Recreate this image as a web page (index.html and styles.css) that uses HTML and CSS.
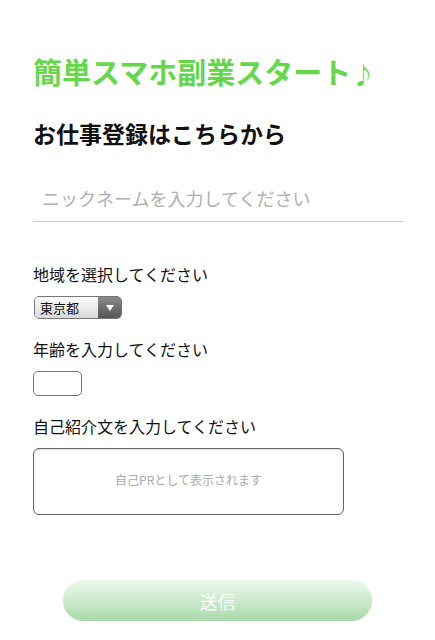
FILE: index.html
```html
<!DOCTYPE html>
<html lang="ja">
<head>
    <meta charset="UTF-8">
    <meta name="viewport" content="width=device-width, initial-scale=1.0">
    <title>お仕事登録</title>
    <link rel="stylesheet" href="styles.css">
</head>
<body>

    <div class="container">
        <h1 class="title">簡単スマホ副業スタート<span class="note">♪</span></h1>
        <h2 class="subtitle">お仕事登録はこちらから</h2>
        <form id="entryForm">
            <div class="nickname">
                <input type="text" name="nickname" placeholder="ニックネームを入力してください">
            </div>
            <div class="form-group">
                <label for="area">地域を選択してください</label>
                <div class="select-box">
                    <span class="select-value">東京都</span>
                    <span class="select-arrow"></span>
                </div>
            </div>
            <div class="form-group">
                <label for="age">年齢を入力してください</label>
                <input type="text" id="age" class="age" name="age">
            </div>
            <div class="form-group">
                <label for="profile">自己紹介文を入力してください</label>
                <textarea id="profile" name="profile" placeholder="自己PRとして表示されます"></textarea>
            </div>
            <div class="submit-row">
                <button type="submit">送信</button>
            </div>
        </form>
    </div>

</body>
</html>
```

FILE: styles.css
```css
body {
    font-family: "Noto Sans CJK JP", sans-serif;
    background-color: #ffffff;
    color: #111;
    margin: 0;
}
.container {
    padding: 50px 32px 0 33px;
}
.title {
    margin: 0;
    height: 42px;
    font-size: 29px;
    line-height: 42px;
    font-weight: bold;
    color: #64d84a;
}
.title .note {
    font-size: 24px;
    line-height: 1;
}
.subtitle {
    margin: 24px 0 0;
    font-size: 23px;
    line-height: 34px;
    font-weight: bold;
    color: #111;
}
.nickname {
    margin-top: 33px;
    border-bottom: 1px solid #c8c8c8;
    padding: 0 0 8px 9px;
}
.nickname input {
    width: 100%;
    border: none;
    outline: none;
    padding: 0;
    font-family: inherit;
    font-size: 18px;
    line-height: 30px;
    color: #333;
}
.nickname input::placeholder {
    color: #b0b0b0;
}
.form-group {
    margin-top: 40px;
}
.form-group + .form-group {
    margin-top: 18px;
}
label {
    display: block;
    font-size: 16px;
    line-height: 24px;
    margin-bottom: 10px;
}
.select-box {
    display: flex;
    width: 86px;
    height: 21px;
    border: 1px solid #777;
    border-radius: 5px;
    overflow: hidden;
    margin-left: 1px;
}
.select-value {
    flex: 1;
    font-size: 13px;
    line-height: 21px;
    padding-left: 5px;
    background: linear-gradient(#fdfdfd, #d9d9d9);
}
.select-arrow {
    width: 23px;
    background: linear-gradient(#8a8a8a, #555);
    display: flex;
    align-items: center;
    justify-content: center;
}
.select-arrow::after {
    content: "";
    border-left: 4px solid transparent;
    border-right: 4px solid transparent;
    border-top: 6px solid #fff;
}
.age {
    display: block;
    width: 49px;
    height: 25px;
    box-sizing: border-box;
    border: 1px solid #777;
    border-radius: 5px;
    padding: 0 4px;
    margin-top: 2px;
}
textarea {
    display: block;
    width: 311px;
    height: 67px;
    box-sizing: border-box;
    border: 1px solid #666;
    border-radius: 6px;
    padding: 22px 10px;
    margin-top: 0;
    font-family: inherit;
    font-size: 12px;
    text-align: center;
    resize: none;
    box-shadow: inset 0 1px 2px rgba(0, 0, 0, 0.15);
}
textarea::placeholder {
    color: #aaa;
}
.submit-row {
    margin-top: 65px;
    padding-left: 30px;
}
button {
    width: 309px;
    height: 41px;
    border: none;
    border-radius: 21px;
    background: linear-gradient(#eefaee, #a9d9ab);
    color: #fff;
    font-family: inherit;
    font-size: 18px;
    cursor: pointer;
    box-shadow: 0 0 2px rgba(0, 0, 0, 0.08);
}
```
